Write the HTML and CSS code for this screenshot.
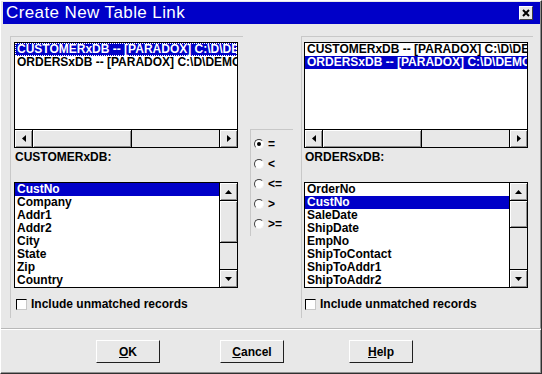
FILE: index.html
```html
<!DOCTYPE html>
<html>
<head>
<meta charset="utf-8">
<title>Create New Table Link</title>
<link rel="stylesheet" href="styles.css">
</head>
<body>
<div class="dialog">
  <div class="titlebar">
    <span class="title">Create New Table Link</span>
    <span class="close"><svg width="8" height="8" viewBox="0 0 8 8"><path d="M1 1L7 7M7 1L1 7" stroke="#000" stroke-width="2" fill="none"/></svg></span>
  </div>
  <div class="main">
    <div class="group side">
      <div class="listbox top">
        <div class="items">
          <div class="item sel focus">CUSTOMERxDB -- [PARADOX] C:\D\DEMOS\DATA</div>
          <div class="item">ORDERSxDB -- [PARADOX] C:\D\DEMOS\DATA</div>
        </div>
        <div class="hscroll">
          <div class="sbtn l"><svg width="4" height="7" viewBox="0 0 4 7"><path d="M4 0V7L0 3.5Z" fill="#000"/></svg></div>
          <div class="hthumb wide"></div>
          <div class="track"></div>
          <div class="sbtn r"><svg width="4" height="7" viewBox="0 0 4 7"><path d="M0 0V7L4 3.5Z" fill="#000"/></svg></div>
        </div>
      </div>
      <div class="label">CUSTOMERxDB:</div>
      <div class="listbox fields">
        <div class="items">
          <div class="item sel">CustNo</div>
          <div class="item">Company</div>
          <div class="item">Addr1</div>
          <div class="item">Addr2</div>
          <div class="item">City</div>
          <div class="item">State</div>
          <div class="item">Zip</div>
          <div class="item">Country</div>
        </div>
        <div class="vscroll">
          <div class="sbtn u"><svg width="7" height="4" viewBox="0 0 7 4"><path d="M0 4H7L3.5 0Z" fill="#000"/></svg></div>
          <div class="vthumb tall"></div>
          <div class="sbtn d"><svg width="7" height="4" viewBox="0 0 7 4"><path d="M0 0H7L3.5 4Z" fill="#000"/></svg></div>
        </div>
      </div>
      <div class="check"><span class="box"></span>Include unmatched records</div>
    </div>

    <div class="group ops">
      <div class="radio"><span class="rc"><span class="dot"></span></span>=</div>
      <div class="radio"><span class="rc"></span>&lt;</div>
      <div class="radio"><span class="rc"></span>&lt;=</div>
      <div class="radio"><span class="rc"></span>&gt;</div>
      <div class="radio"><span class="rc"></span>&gt;=</div>
    </div>

    <div class="group side right">
      <div class="listbox top">
        <div class="items">
          <div class="item">CUSTOMERxDB -- [PARADOX] C:\D\DEMOS\DATA</div>
          <div class="item sel">ORDERSxDB -- [PARADOX] C:\D\DEMOS\DATA</div>
        </div>
        <div class="hscroll">
          <div class="sbtn l"><svg width="4" height="7" viewBox="0 0 4 7"><path d="M4 0V7L0 3.5Z" fill="#000"/></svg></div>
          <div class="hthumb wide"></div>
          <div class="track"></div>
          <div class="sbtn r"><svg width="4" height="7" viewBox="0 0 4 7"><path d="M0 0V7L4 3.5Z" fill="#000"/></svg></div>
        </div>
      </div>
      <div class="label">ORDERSxDB:</div>
      <div class="listbox fields">
        <div class="items">
          <div class="item">OrderNo</div>
          <div class="item sel">CustNo</div>
          <div class="item">SaleDate</div>
          <div class="item">ShipDate</div>
          <div class="item">EmpNo</div>
          <div class="item">ShipToContact</div>
          <div class="item">ShipToAddr1</div>
          <div class="item">ShipToAddr2</div>
        </div>
        <div class="vscroll">
          <div class="sbtn u"><svg width="7" height="4" viewBox="0 0 7 4"><path d="M0 4H7L3.5 0Z" fill="#000"/></svg></div>
          <div class="vthumb short"></div>
          <div class="sbtn d"><svg width="7" height="4" viewBox="0 0 7 4"><path d="M0 0H7L3.5 4Z" fill="#000"/></svg></div>
        </div>
      </div>
      <div class="check right-check"><span class="box"></span>Include unmatched records</div>
    </div>
  </div>
  <div class="sep"></div>
  <div class="buttons">
    <div class="btn"><span><u>O</u>K</span></div>
    <div class="btn cancel"><span><u>C</u>ancel</span></div>
    <div class="btn help"><span><u>H</u>elp</span></div>
  </div>
</div>
</body>
</html>
```
FILE: styles.css
```css
html, body {
  margin: 0;
  padding: 0;
  background: #e8e8e8;
}
body {
  font-family: "Liberation Sans", Arial, sans-serif;
  font-weight: bold;
  font-size: 12px;
  color: #000;
}
.dialog {
  width: 542px;
  height: 374px;
  box-sizing: border-box;
  border: 1px solid;
  border-color: #ffffff #303030 #303030 #ffffff;
  box-shadow: inset -1px -1px 0 #909090;
  background: #e8e8e8;
  display: flex;
  flex-direction: column;
}
.titlebar {
  margin: 1px 1px 0 2px;
  height: 22px;
  background: #0000c8;
  color: #fff;
  display: flex;
  align-items: center;
  justify-content: space-between;
  padding: 0 7px 0 3px;
}
.title {
  font-weight: normal;
  font-size: 17px;
  letter-spacing: 0.4px;
  line-height: 22px;
}
.close {
  width: 14px;
  height: 14px;
  box-sizing: border-box;
  background: #e8e8e8;
  border: 1px solid;
  border-color: #ffffff #404040 #404040 #ffffff;
  display: flex;
  align-items: center;
  justify-content: center;
}
.main {
  display: flex;
  align-items: flex-start;
  margin-top: 12px;
  padding-left: 9px;
  height: 292px;
}
.group {
  box-sizing: border-box;
  border-top: 1px solid #c8c8c8;
  border-left: 1px solid #c8c8c8;
}
.side {
  width: 233px;
  height: 282px;
  padding: 5px 0 0 3px;
}
.side.right {
  width: 232px;
  padding-left: 2px;
}
.ops {
  width: 43px;
  height: 107px;
  margin: 93px 8px 0 7px;
  padding: 3px 0 0 3px;
}
.listbox {
  width: 224px;
  height: 106px;
  box-sizing: border-box;
  border: 1px solid #000;
  background: #fff;
  display: flex;
}
.listbox.top {
  flex-direction: column;
}
.items {
  flex: 1;
  min-width: 0;
  overflow: hidden;
}
.item {
  height: 13px;
  line-height: 13px;
  padding-left: 2px;
  white-space: nowrap;
  color: #000;
}
.item.sel {
  background: #0000c8;
  color: #fff;
}
.item.focus {
  outline: 1px dotted #ffffff;
  outline-offset: -1px;
}
.hscroll {
  height: 18px;
  flex: none;
  box-sizing: border-box;
  border-top: 1px solid #000;
  background: #e8e8e8;
  display: flex;
}
.sbtn {
  flex: none;
  width: 17px;
  display: flex;
  align-items: center;
  justify-content: center;
  background: #e8e8e8;
  box-shadow: inset 1px 1px 0 #ffffff, inset -1px -1px 0 #909090;
}
.sbtn svg {
  display: block;
}
.hscroll .sbtn.l {
  border-right: 1px solid #000;
}
.hscroll .sbtn.r {
  border-left: 1px solid #000;
}
.hthumb {
  flex: none;
  width: 99px;
  box-sizing: border-box;
  border-right: 1px solid #000;
  box-shadow: inset 1px 1px 0 #ffffff, inset -1px -1px 0 #909090;
}
.track {
  flex: 1;
}
.fields {
  margin-top: 18px;
}
.vscroll {
  flex: none;
  width: 18px;
  box-sizing: border-box;
  border-left: 1px solid #000;
  background: #e8e8e8;
  display: flex;
  flex-direction: column;
}
.vscroll .sbtn {
  width: auto;
  height: 17px;
}
.vscroll .sbtn.u {
  border-bottom: 1px solid #000;
}
.vscroll .sbtn.d {
  border-top: 1px solid #000;
  margin-top: auto;
}
.vthumb {
  flex: none;
  box-sizing: border-box;
  border-bottom: 1px solid #000;
  box-shadow: inset 1px 1px 0 #ffffff, inset -1px -1px 0 #909090;
}
.vthumb.tall {
  height: 42px;
}
.vthumb.short {
  height: 27px;
}
.label {
  margin-top: 2px;
  padding-left: 1px;
  line-height: 14px;
  height: 14px;
}
.check {
  display: flex;
  align-items: center;
  gap: 4px;
  height: 14px;
  margin: 9px 0 0 2px;
}
.check.right-check {
  margin-left: 1px;
}
.box {
  width: 11px;
  height: 11px;
  box-sizing: border-box;
  background: #fff;
  border: 1px solid;
  border-color: #000 #c8c8c8 #c8c8c8 #000;
}
.radio {
  display: flex;
  align-items: center;
  gap: 4px;
  height: 20px;
  padding-top: 1px;
  box-sizing: border-box;
}
.rc {
  width: 10px;
  height: 10px;
  box-sizing: border-box;
  border-radius: 50%;
  background: #fff;
  border: 1px solid;
  border-color: #404040 #f4f4f4 #f4f4f4 #404040;
  display: flex;
  align-items: center;
  justify-content: center;
}
.dot {
  width: 4px;
  height: 4px;
  border-radius: 50%;
  background: #000;
}
.sep {
  height: 0;
  border-top: 1px solid #b8b8b8;
  border-bottom: 1px solid #ffffff;
}
.buttons {
  display: flex;
  margin-top: 10px;
  padding-left: 95px;
}
.btn {
  width: 64px;
  height: 23px;
  box-sizing: border-box;
  border: 1px solid;
  border-color: #ffffff #202020 #202020 #ffffff;
  display: flex;
  align-items: center;
  justify-content: center;
}
.btn.cancel {
  margin-left: 60px;
}
.btn.help {
  margin-left: 65px;
}
```
